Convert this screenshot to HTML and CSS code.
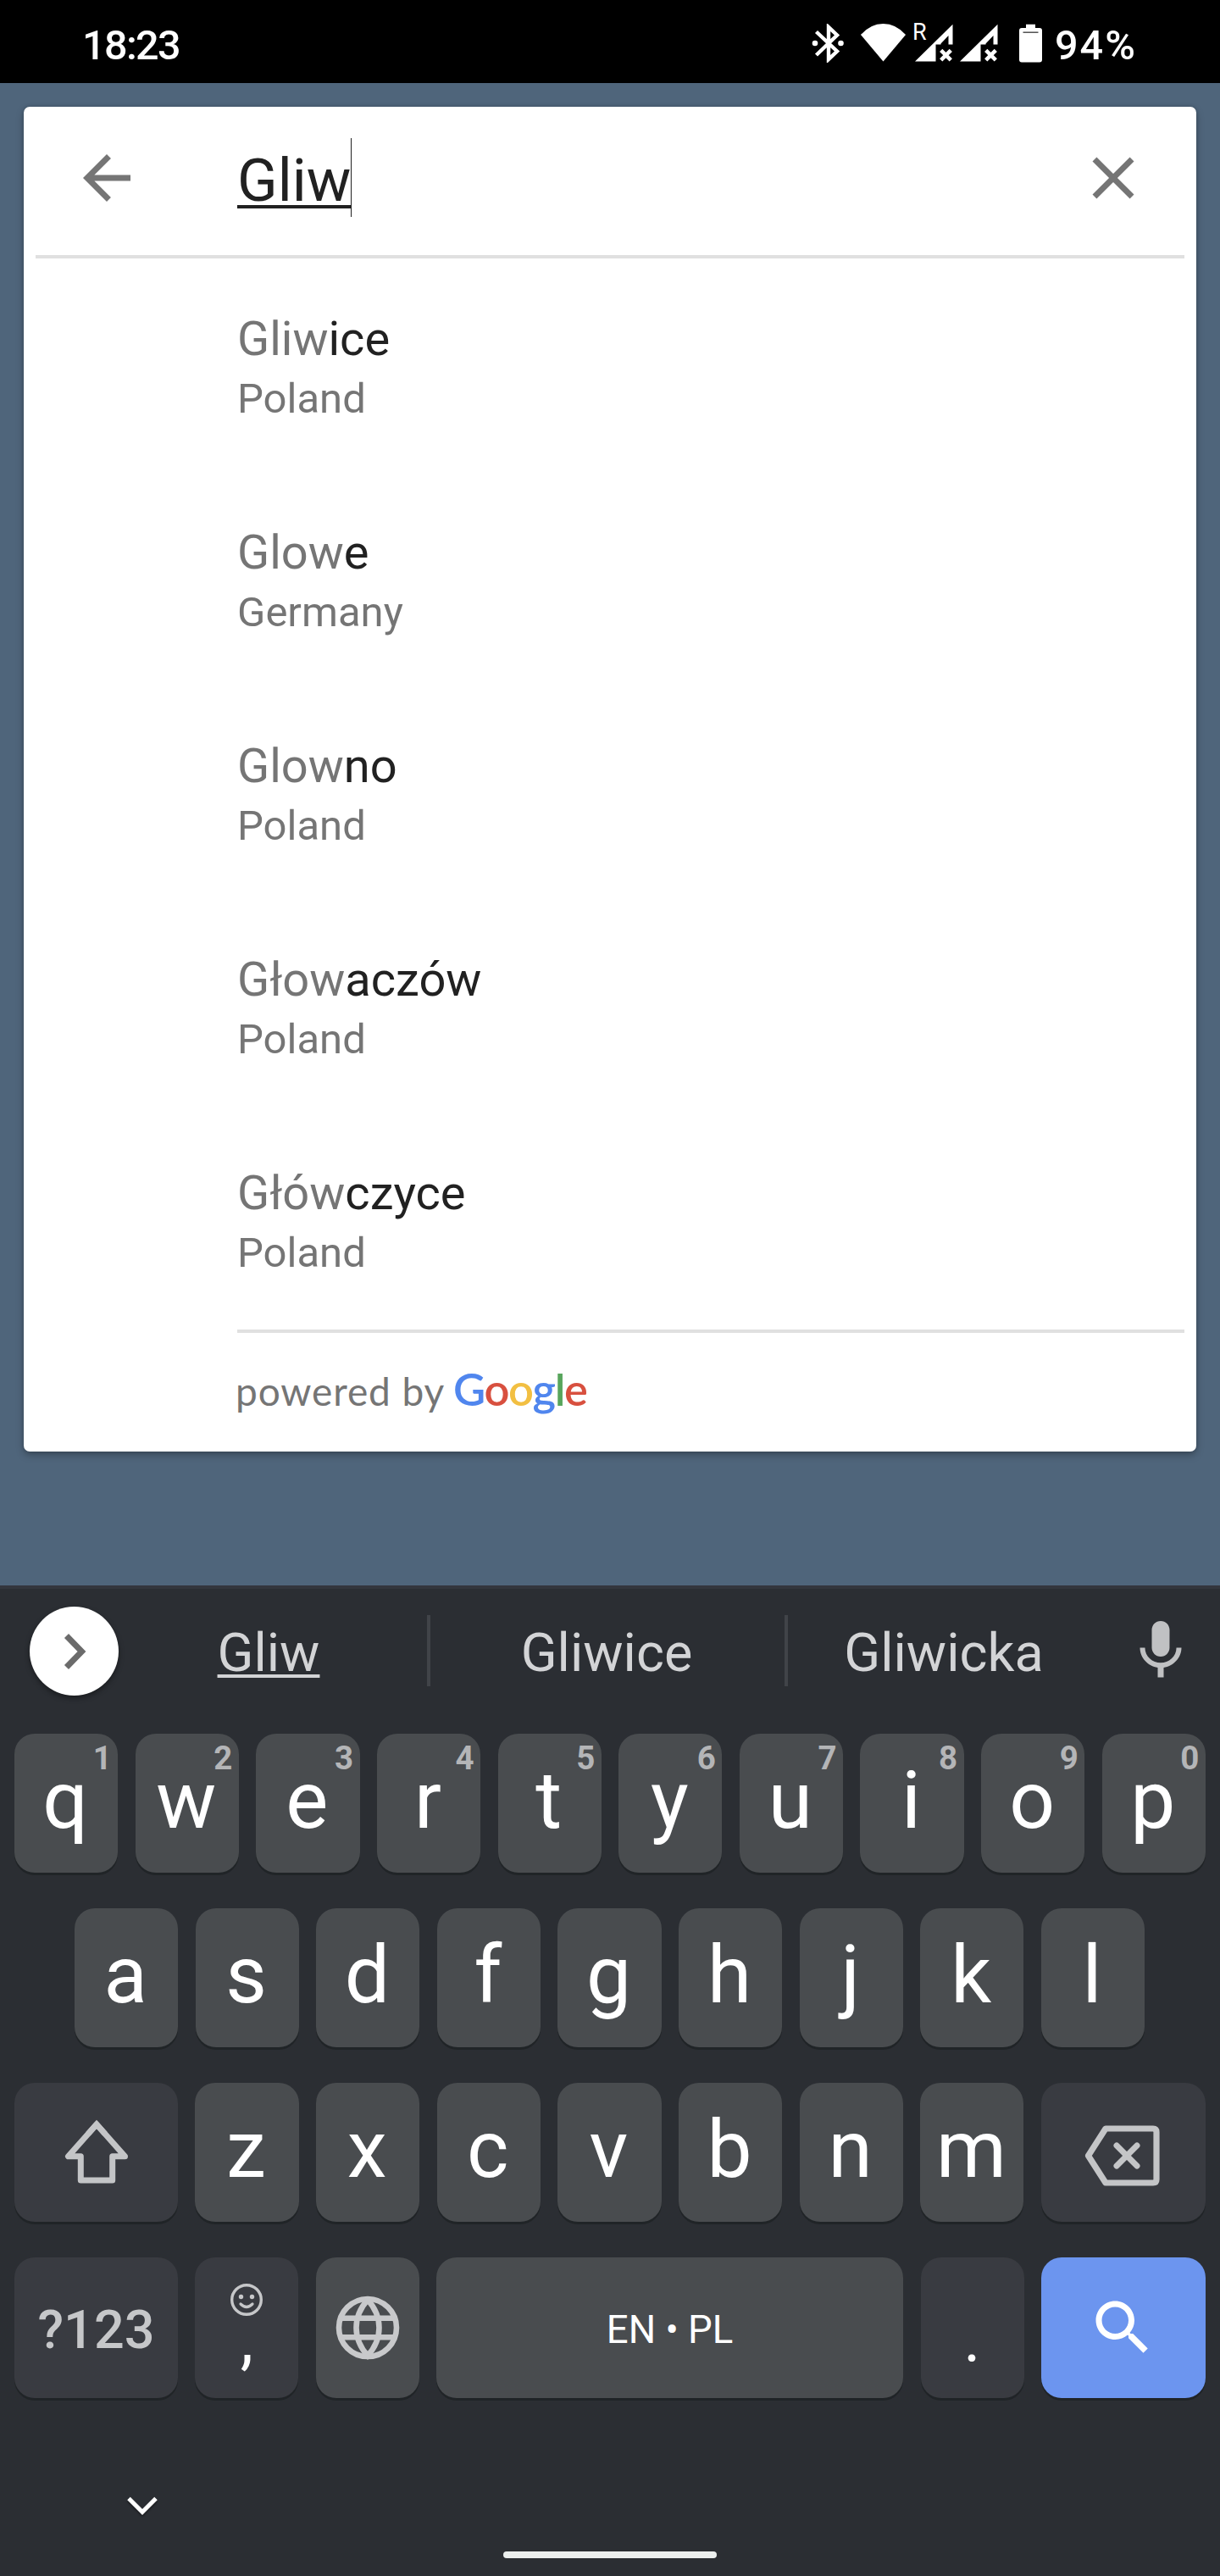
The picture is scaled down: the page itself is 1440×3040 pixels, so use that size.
FILE: index.html
```html
<!DOCTYPE html>
<html lang="en">
<head>
<meta charset="utf-8">
<title>Place search</title>
<link rel="stylesheet" href="styles.css">
</head>
<body>
<div class="screen">
  <header class="status">
    <span class="clock">18:23</span>
    <div class="status-icons">
      <svg class="bt" width="39" height="46" viewBox="0 0 39 46"><path d="M5.500 9.500L30 32.500L20 42V4L30 13.500L5.500 37" fill="none" stroke="#fff" stroke-width="4.400"/><circle cx="4" cy="23" r="3.300" fill="#fff"/><circle cx="34.500" cy="23" r="3.300" fill="#fff"/></svg>
      <svg class="wifi" width="53" height="46" viewBox="0 0 53 46"><path d="M0 13Q11.500 0 26.500 0T53 13L26.500 44.500Z" fill="#fff"/></svg>
      <div class="signal"><span class="roam">R</span><svg width="45" height="46" viewBox="0 0 45 46"><path d="M0 44.500L44.500 .7V24.500H39.500V14L30.500 23.500V24.500H24.500V44.500Z" fill="#fff"/><path d="M30.700 31.300l11.600 11.600M42.300 31.300l-11.600 11.600" stroke="#fff" stroke-width="4.600"/></svg></div>
      <div class="signal second"><svg width="45" height="46" viewBox="0 0 45 46"><path d="M0 44.500L44.500 .7V24.500H39.500V14L30.500 23.500V24.500H24.500V44.500Z" fill="#fff"/><path d="M30.700 31.300l11.600 11.600M42.300 31.300l-11.600 11.600" stroke="#fff" stroke-width="4.600"/></svg></div>
      <svg class="battery" width="27" height="46" viewBox="0 0 27 46"><path d="M8 .700h11V5h5a3 3 0 0 1 3 3v34.500a3 3 0 0 1-3 3H3a3 3 0 0 1-3-3V8a3 3 0 0 1 3-3h5Z" fill="#fff"/><path d="M4.500 10.200h18" stroke="#444" stroke-width="1.400"/></svg>
      <span class="percent">94%</span>
    </div>
  </header>

  <main class="content">
    <section class="card">
      <div class="searchbar">
        <svg class="back" width="84" height="84" viewBox="0 0 24 24"><path fill="#757575" d="M20 11H7.830l5.590-5.590L12 4l-8 8 8 8 1.410-1.410L7.830 13H20v-2z"/></svg>
        <div class="field"><span class="typed">Gliw</span><i class="caret"></i></div>
        <svg class="clear" width="84" height="84" viewBox="0 0 24 24"><path fill="#757575" d="M19 6.410L17.590 5 12 10.590 6.410 5 5 6.410 10.590 12 5 17.590 6.410 19 12 13.410 17.590 19 19 17.590 13.410 12z"/></svg>
      </div>
      <div class="rule"></div>
      <ul class="results">
        <li><p class="place">Gliw<b>ice</b></p><p class="country">Poland</p></li>
        <li><p class="place">Glow<b>e</b></p><p class="country">Germany</p></li>
        <li><p class="place">Glow<b>no</b></p><p class="country">Poland</p></li>
        <li><p class="place">Głow<b>aczów</b></p><p class="country">Poland</p></li>
        <li><p class="place">Głów<b>czyce</b></p><p class="country">Poland</p></li>
      </ul>
      <div class="rule inset"></div>
      <footer class="powered"><span class="by">powered by</span><span class="google"><span class="blue">G</span><span class="red">o</span><span class="yellow">o</span><span class="blue">g</span><span class="green">l</span><span class="red">e</span></span></footer>
    </section>
  </main>

  <section class="keyboard">
    <div class="strip">
      <div class="more"><svg width="105" height="105" viewBox="0 0 105 105"><path d="M43.500 34.500L61.500 53L43.500 71.500" fill="none" stroke="#6b6b6b" stroke-width="7"/></svg></div>
      <div class="suggestion first"><span>Gliw</span></div>
      <div class="sep"></div>
      <div class="suggestion">Gliwice</div>
      <div class="sep"></div>
      <div class="suggestion last">Gliwicka</div>
      <svg class="mic" width="84" height="84" viewBox="0 0 24 24"><path fill="#c0c1c3" d="M12 14c1.660 0 2.990-1.340 2.990-3L15 5c0-1.660-1.340-3-3-3S9 3.340 9 5v6c0 1.660 1.340 3 3 3zm5.300-3c0 3-2.540 5.100-5.300 5.100S6.700 14 6.700 11H5c0 3.410 2.720 6.230 6 6.720V21h2v-3.280c3.280-.48 6-3.300 6-6.720h-1.700z"/></svg>
    </div>
    <div class="keys">
      <div class="row">
        <div class="key">q<sup>1</sup></div><div class="key">w<sup>2</sup></div><div class="key">e<sup>3</sup></div><div class="key">r<sup>4</sup></div><div class="key">t<sup>5</sup></div><div class="key">y<sup>6</sup></div><div class="key">u<sup>7</sup></div><div class="key">i<sup>8</sup></div><div class="key">o<sup>9</sup></div><div class="key">p<sup>0</sup></div>
      </div>
      <div class="row middle">
        <div class="key">a</div><div class="key">s</div><div class="key">d</div><div class="key">f</div><div class="key">g</div><div class="key">h</div><div class="key">j</div><div class="key">k</div><div class="key">l</div>
      </div>
      <div class="row">
        <div class="key wide dark icon"><svg width="80" height="77" viewBox="0 0 80 77"><path d="M40 6L6.500 43.800H21.300V72H58.700V43.800H73.500Z" fill="none" stroke="#c4c5c7" stroke-width="7" stroke-linejoin="round"/><path d="M30 17.300L40 6L50 17.300" fill="none" stroke="#c4c5c7" stroke-width="7"/></svg></div>
        <div class="key">z</div><div class="key">x</div><div class="key">c</div><div class="key">v</div><div class="key">b</div><div class="key">n</div><div class="key">m</div>
        <div class="key wide dark icon erase"><svg width="90" height="72" viewBox="0 0 90 72"><path d="M25 4H81Q85 4 85 8V64Q85 68 81 68H25L4.500 36Z" fill="none" stroke="#c4c5c7" stroke-width="7.200" stroke-linejoin="round"/><path d="M38 24L62 48M62 24L38 48" stroke="#c4c5c7" stroke-width="7" stroke-linecap="round"/></svg></div>
      </div>
      <div class="row bottom">
        <div class="key wide dark symbols">?123</div>
        <div class="key dark comma"><svg width="38" height="38" viewBox="0 0 38 38"><circle cx="19" cy="19" r="17.300" fill="none" stroke="#c6c7c9" stroke-width="3.400"/><circle cx="12.500" cy="15.500" r="2.700" fill="#c6c7c9"/><circle cx="25.500" cy="15.500" r="2.700" fill="#c6c7c9"/><path d="M12 24Q19 31 26 24" fill="none" stroke="#c6c7c9" stroke-width="3.200" stroke-linecap="round"/></svg><span>,</span></div>
        <div class="key icon"><svg width="76" height="76" viewBox="0 0 76 76"><g fill="none" stroke="#c8c9cb" stroke-width="6.600"><circle cx="38" cy="38" r="34"/><path d="M38 5Q24.500 20 24.500 38T38 71Q51.500 56 51.500 38T38 5M6 26.700H70M6 49.300H70"/></g></svg></div>
        <div class="key space">EN • PL</div>
        <div class="key dark dot"><span>.</span></div>
        <div class="key wide accent icon"><svg width="84" height="84" viewBox="0 0 24 24"><path fill="#fff" d="M15.500 14h-.790l-.280-.270C15.410 12.590 16 11.110 16 9.500 16 5.910 13.090 3 9.500 3S3 5.910 3 9.500 5.910 16 9.500 16c1.610 0 3.090-.590 4.230-1.570l.270.280v.790l5 4.990L20.490 19l-4.990-5zm-6 0C7.010 14 5 11.990 5 9.500S7.010 5 9.500 5 14 7.010 14 9.500 11.990 14 9.500 14z"/></svg></div>
      </div>
    </div>
    <nav class="navbar">
      <svg class="hide" width="36" height="24" viewBox="0 0 36 24"><path d="M2 2.500L18 18.500L34 2.500" fill="none" stroke="#fff" stroke-width="5"/></svg>
      <div class="home"></div>
    </nav>
  </section>
</div>
</body>
</html>
```
FILE: styles.css
```css
* { box-sizing: border-box; margin: 0; padding: 0; }
body { width: 1440px; background: #2b2e33; font-family: Roboto, "Liberation Sans", sans-serif; }
svg { display: block; flex: none; }
.screen { width: 1440px; height: 3040px; display: flex; flex-direction: column; overflow: hidden; }

.status { height: 98px; background: #000; color: #fff; display: flex; justify-content: space-between; padding: 0 97px 0 97px; font-weight: 500; font-size: 48.5px; line-height: 107px; }
.clock { letter-spacing: -1.6px; }
.status-icons { display: flex; align-items: flex-start; }
.status-icons > svg, .signal { margin-top: 28px; }
.wifi { margin-left: 19px; }
.signal { position: relative; margin-left: 11px; }
.signal.second { margin-left: 8px; }
.roam { position: absolute; left: -3px; top: -7px; font-size: 27px; font-weight: 400; line-height: 34px; }
.battery { margin-left: 25px; }
.percent { margin-left: 15px; width: 98px; white-space: nowrap; letter-spacing: 2px; }

.content { height: 1773px; background: #4f657b; padding: 28px; }
.card { height: 1587px; background: #fff; border-radius: 7px; box-shadow: 0 4px 10px rgba(0, 0, 0, .28), 0 0 4px rgba(0, 0, 0, .15); }
.searchbar { height: 175px; padding: 0 56px 7px; display: flex; align-items: center; }
.field { flex: 1; display: flex; align-items: center; margin-left: 112px; color: #212121; }
.typed { font-size: 70px; line-height: 86px; padding-top: 6px; text-decoration: underline; text-decoration-thickness: 4px; text-underline-offset: 5px; text-decoration-skip-ink: none; }
.caret { width: 1px; height: 93px; margin-bottom: 1px; background: #212121; }
.rule { height: 4px; margin: 0 14px; background: #e0e0e0; }
.rule.inset { margin-left: 252px; }
.results { list-style: none; height: 1264px; padding: 62px 0 0 252px; }
.results li { height: 252px; color: #757575; }
.place { font-size: 56px; line-height: 66px; }
.place b { font-weight: 400; color: #212121; }
.country { font-size: 49px; line-height: 58px; margin-top: 9px; }
.powered { height: 140px; padding-left: 250px; display: flex; align-items: baseline; font-family: Lato, sans-serif; color: #757575; line-height: 131px; }
.by { font-size: 46px; letter-spacing: .9px; width: 257px; white-space: nowrap; }
.google { font-size: 52.5px; font-weight: 600; letter-spacing: -1.4px; }
.blue { color: #5086ee; }
.red { color: #d8503f; }
.yellow { color: #f2bf42; }
.green { color: #58a55c; }

.keyboard { flex: 1; border-top: 4px solid #33363d; background: #2b2e33; color: #fff; display: flex; flex-direction: column; }
.strip { height: 146px; padding: 0 28px 0 35px; display: flex; align-items: center; color: #d3d4d6; font-size: 63px; }
.more { width: 105px; height: 105px; border-radius: 50%; background: #fff; box-shadow: 0 3px 6px rgba(0, 0, 0, .4); }
.suggestion { width: 418px; text-align: center; line-height: 74px; padding: 5px 2px 0 0; }
.suggestion.first { width: 364px; padding-right: 10px; }
.suggestion.first span { text-decoration: underline; text-decoration-thickness: 4px; text-underline-offset: 4px; text-decoration-skip-ink: none; }
.suggestion.last { width: 368px; padding-right: 0; }
.sep { width: 4px; height: 84px; background: #414449; }
.mic { margin-left: 30px; }
.keys { padding: 25px 17px 0; display: flex; flex-direction: column; gap: 42px; }
.row { height: 164px; display: flex; gap: 20.3px; }
.row.middle { padding: 0 72px 0 71px; }
.row.bottom { height: 166px; }
.key { flex: 1 1 0; position: relative; border-radius: 24px; background: #494c4f; box-shadow: 0 3px 0 #202427; text-align: center; font-size: 94.5px; line-height: 157px; }
.row:not(.bottom) .key:not(.icon) { padding-right: 2px; }
.key.dark { background: #393b41; }
.key.accent { background: #6c95ef; }
.key.wide { flex: 0 0 194.2px; }
.key.wide:first-child { flex-basis: 193px; }
.key sup { position: absolute; right: 7.500px; top: 10px; font-size: 38.5px; font-weight: 700; line-height: 38px; color: #b4b5b7; }
.icon { display: flex; align-items: center; justify-content: center; padding-top: 0; }
.row:nth-child(3) .icon { padding-bottom: 1px; }
.row:nth-child(3) .icon.erase { padding: 7px 2px 0 0; }
.symbols { font-size: 63px; font-weight: 500; line-height: 171px; color: #c6c7c9; }
.comma, .dot { display: flex; flex-direction: column; align-items: center; padding-top: 31px; }
.key.dark.comma, .key.dark.dot { flex: 0 0 122px; font-size: 77px; line-height: 90px; }
.comma span { margin-top: -17px; }
.dot span { margin-top: 21px; }
.row.bottom .icon:not(.wide) { flex: 0 0 122px; }
.row.bottom .icon.accent { padding-right: 2px; }
.space { font-size: 45.5px; line-height: 171px; }
.navbar { flex: 1; padding: 116px 0 0; }
.hide { margin-left: 150px; filter: drop-shadow(0 2px 1px rgba(0, 0, 0, .4)); }
.home { width: 252px; height: 8px; margin: 41px auto 0; border-radius: 4px; background: #ecefee; }
```
